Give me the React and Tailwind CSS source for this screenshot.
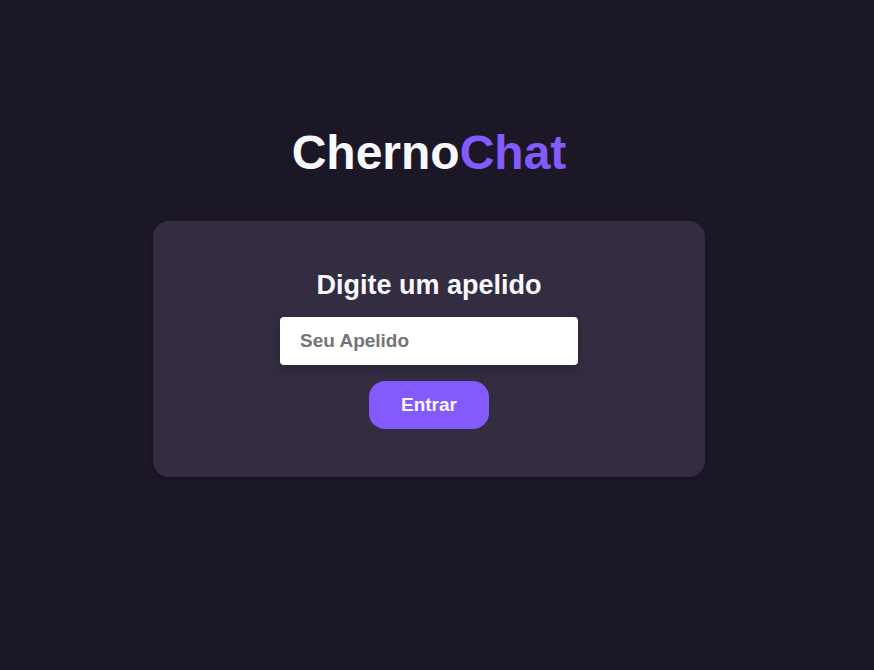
export default function App() {
  return (
    <main className="flex min-h-screen flex-col items-center justify-center bg-[#1b1726] pr-4 pb-17 font-['Liberation_Sans',Arial,sans-serif] font-bold text-[#f8f8ff]">
      <h1 className="mb-10 text-5xl leading-14">
        Cherno<span className="text-[#835afd]">Chat</span>
      </h1>
      <form
        onSubmit={(event) => event.preventDefault()}
        className="flex w-full max-w-[552px] flex-col items-center rounded-2xl bg-[#342d42] px-8 py-12 shadow-[0_2px_6px_rgba(0,0,0,0.2)]"
      >
        <label htmlFor="nickname" className="mb-4 text-[27px] leading-8">
          Digite um apelido
        </label>
        <input
          id="nickname"
          type="text"
          placeholder="Seu Apelido"
          className="h-12 w-[298px] rounded bg-white px-5 text-[19px] leading-6 text-[#333333] shadow-[0_4px_10px_rgba(0,0,0,0.25)] outline-none placeholder:text-[#757575]"
        />
        <button
          type="submit"
          className="mt-4 h-12 w-30 rounded-2xl bg-[#835afd] text-[19px] leading-6"
        >
          Entrar
        </button>
      </form>
    </main>
  );
}
